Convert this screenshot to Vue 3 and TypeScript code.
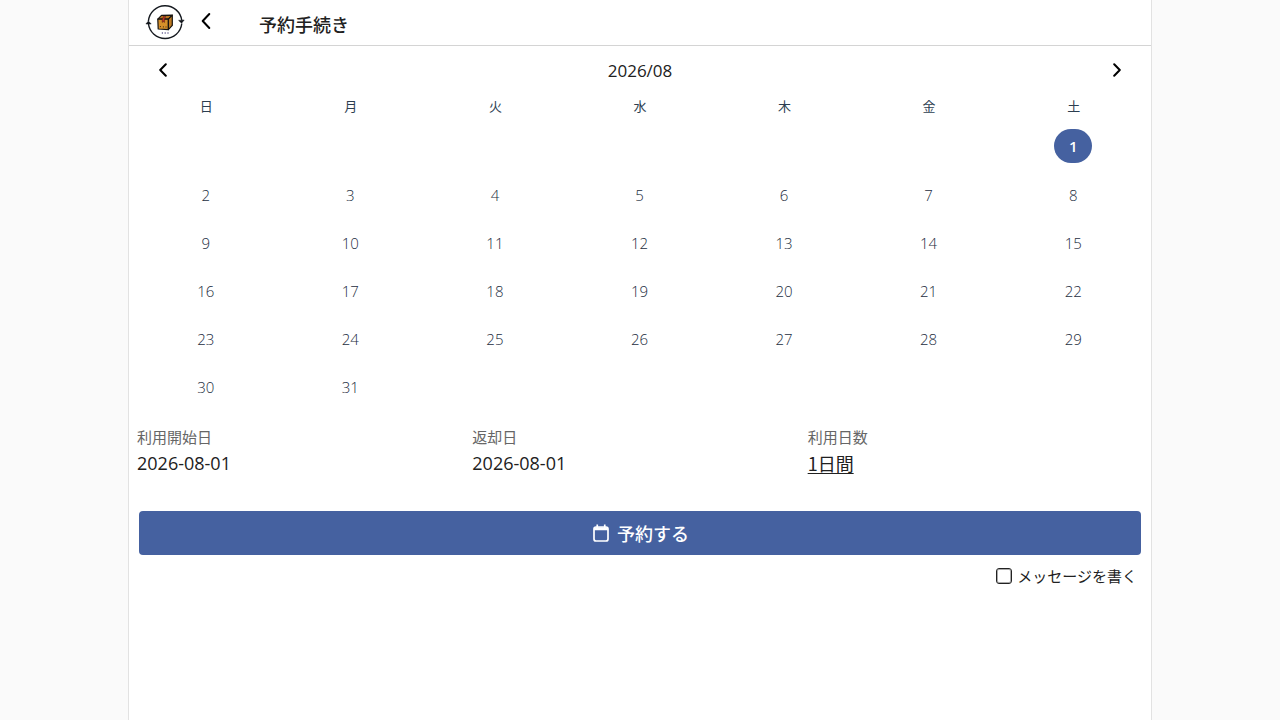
<script setup lang="ts">
import { ref, computed } from 'vue'

const weekdays: string[] = ['日', '月', '火', '水', '木', '金', '土']
const year = 2026
const month = 8
const selected = ref(1)
const writeMessage = ref(false)

const pad = (n: number): string => String(n).padStart(2, '0')
const monthLabel = `${year}/${pad(month)}`
const selectedDate = computed(() => `${year}-${pad(month)}-${pad(selected.value)}`)

const weeks = computed<(number | null)[][]>(() => {
  const offset = new Date(year, month - 1, 1).getDay()
  const count = new Date(year, month, 0).getDate()
  const cells: (number | null)[] = Array(offset).fill(null)
  for (let d = 1; d <= count; d++) cells.push(d)
  while (cells.length % 7) cells.push(null)
  const rows: (number | null)[][] = []
  for (let i = 0; i < cells.length; i += 7) rows.push(cells.slice(i, i + 7))
  return rows
})
</script>

<template>
  <div class="shell">
    <header class="topbar">
      <a href="#" class="logo" aria-label="ホーム">
        <svg viewBox="0 0 40 40" width="40" height="40">
          <g fill="none" stroke="#161a20" stroke-width="1.4">
            <path d="M3.4 19A16.8 16.8 0 0 1 36.8 18.5" />
            <path d="M36.8 21.5A16.8 16.8 0 0 1 3.4 21.5" />
          </g>
          <path d="M.9 22 3.4 19 6.2 22ZM33.6 18.4 39.2 18 36.6 21.2Z" fill="#10141a" stroke="#10141a" stroke-width=".5" />
          <g stroke="#181512" stroke-width="1.2" stroke-linejoin="round">
            <path d="M12.8 17.2 16.5 13.4 27.3 13.2 23.4 17.2Z" fill="#b97820" />
            <path d="M12.8 17.2H23.4V27.6L13.2 27Z" fill="#d6902a" />
            <path d="M23.4 17.2 27.3 13.2V23.4L23.4 27.6Z" fill="#bd7a22" />
          </g>
          <path d="M17.2 17 18.6 14.2H20.8L19.6 17V20.4L18.4 19.7 17.2 20.4Z" fill="#b83222" stroke="#2b130e" stroke-width=".4" />
          <path d="M14.9 24.6H15.9M17.9 24.9H18.9M20.5 25H21.5" stroke="#392411" stroke-width="1" />
          <path d="M16.8 31H18M19.6 31H20.8M22.4 31H23.6" stroke="#6f6899" stroke-width="1.6" />
        </svg>
      </a>
      <button type="button" class="icon-btn back" aria-label="戻る">
        <svg viewBox="0 0 12 18" width="12" height="18"><path d="M9.3 2 2.7 9 9.3 16" /></svg>
      </button>
      <h1>予約手続き</h1>
    </header>

    <main>
      <section class="calendar">
        <div class="month-nav">
          <button type="button" class="icon-btn" aria-label="前の月">
            <svg viewBox="0 0 10 14" width="10" height="14"><path d="M7.8 1.2 2.2 7 7.8 12.8" /></svg>
          </button>
          <h2>{{ monthLabel }}</h2>
          <button type="button" class="icon-btn" aria-label="次の月">
            <svg viewBox="0 0 10 14" width="10" height="14"><path d="M2.2 1.2 7.8 7 2.2 12.8" /></svg>
          </button>
        </div>
        <table>
          <thead>
            <tr><th v-for="w in weekdays" :key="w" scope="col">{{ w }}</th></tr>
          </thead>
          <tbody>
            <tr v-for="(week, i) in weeks" :key="i">
              <td v-for="(day, j) in week" :key="j">
                <button v-if="day" type="button" class="day" :class="{ selected: day === selected }" @click="selected = day">{{ day }}</button>
              </td>
            </tr>
          </tbody>
        </table>
      </section>

      <dl class="summary">
        <div><dt>利用開始日</dt><dd>{{ selectedDate }}</dd></div>
        <div><dt>返却日</dt><dd>{{ selectedDate }}</dd></div>
        <div><dt>利用日数</dt><dd><a href="#">1日間</a></dd></div>
      </dl>

      <div class="actions">
        <button type="button" class="reserve">
          <svg viewBox="0 0 16 18" width="16" height="18">
            <rect x="1" y="3" width="14" height="14" rx="2" fill="none" stroke="#fff" stroke-width="1.7" />
            <path d="M1 3.2H15V6.2H1ZM3.4.5H5.1V4H3.4ZM10.9.5H12.6V4H10.9Z" fill="#fff" />
          </svg>
          <span>予約する</span>
        </button>
        <label class="message">
          <input v-model="writeMessage" type="checkbox">
          <span>メッセージを書く</span>
        </label>
      </div>
    </main>
  </div>
</template>

<style>
body {
  background: #fafafa;
}
</style>

<style scoped>
.shell {
  box-sizing: border-box;
  max-width: 1024px;
  min-height: 100vh;
  margin: 0 auto;
  background: #fff;
  border: 1px solid #e2e2e2;
  border-top: 0;
  border-bottom: 0;
  color: #212121;
  font-family: "Open Sans", "Noto Sans CJK JP", sans-serif;
}
button {
  margin: 0;
  padding: 0;
  border: 0;
  background: none;
  color: inherit;
  font: inherit;
  cursor: pointer;
}
svg {
  display: block;
}
.topbar {
  display: flex;
  align-items: center;
  box-sizing: border-box;
  height: 46px;
  padding: 0 16px 2px;
  border-bottom: 1px solid #d4d4d4;
}
.icon-btn path {
  fill: none;
  stroke: #000;
  stroke-width: 2;
  stroke-linecap: round;
  stroke-linejoin: round;
}
.back {
  margin: 0 47px 0 15px;
  padding-bottom: 2px;
}
h1 {
  margin: 0;
  padding-top: 4px;
  font-family: "Noto Sans CJK JP", sans-serif;
  font-size: 18px;
  line-height: 26px;
  font-weight: 500;
}
.calendar {
  padding: 0 5px;
}
.month-nav {
  display: flex;
  justify-content: space-between;
  align-items: center;
  height: 48px;
  padding: 0 24px;
}
h2 {
  margin: 0;
  padding-top: 2px;
  font-size: 17px;
  line-height: 24px;
  font-weight: 400;
}
table {
  width: 100%;
  table-layout: fixed;
  border-collapse: collapse;
  color: #2c3e50;
}
th {
  height: 24px;
  padding: 0;
  font-size: 13px;
  line-height: 24px;
  font-weight: 400;
}
td {
  height: 48px;
  padding: 0 1px 0 0;
  text-align: center;
  vertical-align: middle;
}
tbody tr:first-child td {
  height: 50px;
  padding-top: 3px;
}
.day {
  width: 38px;
  height: 34px;
  border-radius: 17px;
  color: #1c2d3e;
  font-size: 15px;
  line-height: 34px;
  font-weight: 300;
}
.day.selected {
  background: #4561a0;
  color: #fff;
  font-weight: 600;
}
.summary {
  display: grid;
  grid-template-columns: repeat(3, 1fr);
  margin: 0;
  padding: 14px 8px 0;
}
dt {
  color: #666;
  font-size: 15px;
  line-height: 24px;
}
dd {
  margin: 0;
  font-size: 18px;
  line-height: 28px;
}
dd a {
  color: inherit;
  font-family: "Noto Sans CJK JP", sans-serif;
  text-underline-offset: 2px;
}
.actions {
  display: flex;
  flex-direction: column;
  padding: 33px 10px 0;
}
.reserve {
  display: flex;
  align-items: center;
  justify-content: center;
  gap: 8px;
  height: 44px;
  padding-left: 2px;
  border-radius: 4px;
  background: #4561a0;
  color: #fff;
  font-size: 18px;
  font-weight: 500;
}
.message {
  display: flex;
  align-items: center;
  align-self: flex-end;
  gap: 5px;
  padding: 10px 4px 0;
  font-size: 15px;
  line-height: 22px;
}
.message input {
  appearance: none;
  box-sizing: border-box;
  width: 16px;
  height: 16px;
  margin: 0;
  border: 1px solid #222;
  border-radius: 3px;
  background: #fff;
  box-shadow: inset 0 0 0 1px #aaa;
}
.message input:checked {
  background: #4561a0;
}
</style>
